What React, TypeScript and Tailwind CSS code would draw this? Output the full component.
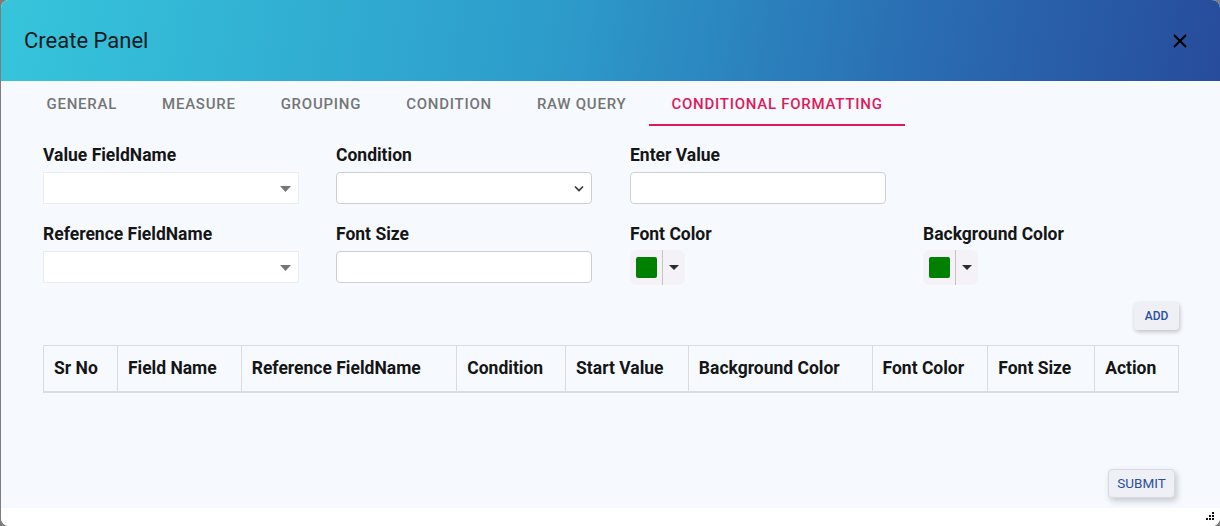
const tabs = ['GENERAL', 'MEASURE', 'GROUPING', 'CONDITION', 'RAW QUERY', 'CONDITIONAL FORMATTING']

const columns = [
  { titulo: 'Sr No', ancho: 'w-[74px]' },
  { titulo: 'Field Name', ancho: 'w-[124px]' },
  { titulo: 'Reference FieldName', ancho: 'w-[216px]' },
  { titulo: 'Condition', ancho: 'w-[109px]' },
  { titulo: 'Start Value', ancho: 'w-[123px]' },
  { titulo: 'Background Color', ancho: 'w-[184px]' },
  { titulo: 'Font Color', ancho: 'w-[116px]' },
  { titulo: 'Font Size', ancho: 'w-[107px]' },
  { titulo: 'Action', ancho: 'w-[83px]' },
]

function Label({ children }: { children: React.ReactNode }) {
  return <div className="text-[17.5px] leading-6 font-bold text-[#151515] mb-[5px]">{children}</div>
}

function MuiSelect() {
  return (
    <div className="relative w-[256px] h-8 bg-white border border-[#ececec]">
      <svg className="absolute right-[7px] top-[13px]" width="11" height="6" viewBox="0 0 11 6">
        <path d="M0 0 L11 0 L5.5 6 Z" fill="#767676" />
      </svg>
    </div>
  )
}

function NativeSelect() {
  return (
    <div className="relative w-[256px] h-8 bg-white border border-[#cfcfcf] rounded-[4px]">
      <svg className="absolute right-[7px] top-[12px]" width="10" height="7" viewBox="0 0 10 7">
        <path d="M1 1.5 L5 5.5 L9 1.5" fill="none" stroke="#333" strokeWidth="1.6" />
      </svg>
    </div>
  )
}

function TextInput() {
  return <div className="w-[256px] h-8 bg-white border border-[#cfcfcf] rounded-[4px]" />
}

function ColorPicker() {
  return (
    <div className="flex items-center w-[55px] h-[35px] bg-[#f4f2f7] rounded-md -mt-px">
      <div className="ml-[6px] w-[21px] h-[21px] bg-[#008000] rounded-[2px]" />
      <div className="ml-[5px] w-px h-full bg-[#c4c4c4]" />
      <svg className="ml-[6px]" width="10" height="5" viewBox="0 0 10 5">
        <path d="M0 0 L10 0 L5 5 Z" fill="#2b2b2b" />
      </svg>
    </div>
  )
}

export default function App() {
  return (
    <div className="h-screen w-full bg-[#7d7d7d] pl-px font-['Roboto',sans-serif]">
      <div className="flex flex-col h-[526px] rounded-lg overflow-hidden bg-white">
        <div className="flex items-center justify-between h-[81px] pl-[23px] pr-[33px] bg-[linear-gradient(100deg,#36c5db_0%,#2d9ccb_45%,#2a6db2_75%,#274c9b_100%)]">
          <h2 className="text-[22px] text-[#141b22]">Create Panel</h2>
          <svg width="14" height="14" viewBox="0 0 14 14">
            <path d="M1 1 L13 13 M13 1 L1 13" stroke="#000" strokeWidth="2" />
          </svg>
        </div>

        <div className="flex flex-col flex-1 bg-[#f6faff]">
          <div className="flex h-[45px] pl-[23px]">
            {tabs.map((t) => (
              <div
                key={t}
                className={`flex items-center px-[22.5px] pt-[3px] h-full text-[15px] font-medium tracking-[0.05em] border-b-2 ${
                  t === 'CONDITIONAL FORMATTING' ? 'text-[#e0195a] border-[#e0195a]' : 'text-[#757575] border-transparent'
                }`}
              >
                {t}
              </div>
            ))}
          </div>

          <div className="pl-[42px] pr-[41px] pt-[17px]">
            <div className="grid grid-cols-[293px_294px_293px_256px] gap-y-[18px]">
              <div>
                <Label>Value FieldName</Label>
                <MuiSelect />
              </div>
              <div>
                <Label>Condition</Label>
                <NativeSelect />
              </div>
              <div>
                <Label>Enter Value</Label>
                <TextInput />
              </div>
              <div />
              <div>
                <Label>Reference FieldName</Label>
                <MuiSelect />
              </div>
              <div>
                <Label>Font Size</Label>
                <TextInput />
              </div>
              <div>
                <Label>Font Color</Label>
                <ColorPicker />
              </div>
              <div>
                <Label>Background Color</Label>
                <ColorPicker />
              </div>
            </div>

            <div className="flex justify-end mt-[17px]">
              <button className="w-[45px] h-[28px] rounded-[4px] bg-[#eef0f5] text-[12px] font-medium text-[#2a4f9f] shadow-[1px_2px_4px_rgba(0,0,0,0.22)]">
                ADD
              </button>
            </div>

            <div className="flex mt-[15px] border border-[#dcdcdc] border-b-2 border-b-[#dcdcdc] h-[48px]">
              {columns.map((c, i) => (
                <div
                  key={c.titulo}
                  className={`${c.ancho} flex items-center px-[10px] text-[17.5px] font-bold text-[#151515] ${
                    i < columns.length - 1 ? 'border-r border-[#dcdcdc]' : ''
                  }`}
                >
                  {c.titulo}
                </div>
              ))}
            </div>
          </div>

          <div className="flex justify-end mt-auto pr-[45px] pb-[10px]">
            <button className="w-[67px] h-[29px] rounded-[4px] bg-[#eef0f5] border border-[#d8dbe3] text-[13.5px] text-[#2a4f9f] shadow-[2px_3px_6px_rgba(0,0,0,0.2)]">
              SUBMIT
            </button>
          </div>
        </div>

        <div className="relative h-[18px] bg-white">
          <svg className="absolute right-[6px] bottom-[4px]" width="10" height="10" viewBox="0 0 10 10">
            <rect x="8" y="0" width="2" height="2" fill="#111" />
            <rect x="5" y="3" width="2" height="2" fill="#111" />
            <rect x="8" y="3" width="2" height="2" fill="#111" />
            <rect x="2" y="6" width="2" height="2" fill="#111" />
            <rect x="5" y="6" width="2" height="2" fill="#111" />
            <rect x="8" y="6" width="2" height="2" fill="#111" />
          </svg>
        </div>
      </div>
    </div>
  )
}
